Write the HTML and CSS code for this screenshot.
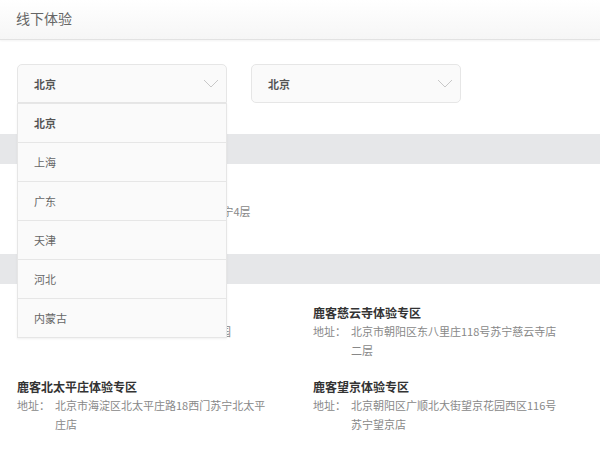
FILE: index.html
```html
<!doctype html>
<html lang="zh-CN">
<head>
    <meta charset="UTF-8">
    <meta name="viewport" content="width=device-width, initial-scale=1.0">
    <title>线下体验</title>
    <link rel="stylesheet" href="styles.css">
</head>
<body>
<div class="header">
    <h1 class="header__title">线下体验</h1>
</div>
<div class="filter">
    <div class="picker picker--open">
        <div class="picker__value">
            <span>北京</span>
            <svg class="picker__arrow" width="16" height="9" viewBox="0 0 16 9"><path d="M1 1 L8 8 L15 1" fill="none" stroke="#c8c8c8" stroke-width="1"/></svg>
        </div>
        <ul class="picker__list">
            <li class="picker__item picker__item--active">北京</li>
            <li class="picker__item">上海</li>
            <li class="picker__item">广东</li>
            <li class="picker__item">天津</li>
            <li class="picker__item">河北</li>
            <li class="picker__item">内蒙古</li>
        </ul>
    </div>
    <div class="picker">
        <div class="picker__value">
            <span>北京</span>
            <svg class="picker__arrow" width="16" height="9" viewBox="0 0 16 9"><path d="M1 1 L8 8 L15 1" fill="none" stroke="#c8c8c8" stroke-width="1"/></svg>
        </div>
    </div>
</div>

<div class="band"></div>
<div class="stores stores--first">
    <div class="store">
        <h3 class="store__name">鹿客西单体验专区</h3>
        <p class="store__addr"><span class="store__label">地址：</span><span>北京市西城区西单北大街1200号苏宁4层</span></p>
    </div>
</div>

<div class="band"></div>
<div class="stores">
    <div class="store">
        <h3 class="store__name">鹿客中关村体验专区</h3>
        <p class="store__addr"><span class="store__label">地址：</span><span>北京市海淀区中关村大街苏宁广场园</span></p>
    </div>
    <div class="store">
        <h3 class="store__name">鹿客慈云寺体验专区</h3>
        <p class="store__addr"><span class="store__label">地址：</span><span>北京市朝阳区东八里庄118号苏宁慈云寺店二层</span></p>
    </div>
    <div class="store">
        <h3 class="store__name">鹿客北太平庄体验专区</h3>
        <p class="store__addr"><span class="store__label">地址：</span><span>北京市海淀区北太平庄路18西门苏宁北太平庄店</span></p>
    </div>
    <div class="store">
        <h3 class="store__name">鹿客望京体验专区</h3>
        <p class="store__addr"><span class="store__label">地址：</span><span>北京朝阳区广顺北大街望京花园西区116号苏宁望京店</span></p>
    </div>
</div>
</body>
</html>
```

FILE: styles.css
```css
body,html{font-family:"Noto Sans CJK SC","Liberation Sans",sans-serif;margin:0;padding:0;background:#fff;color:#333}
h1,h3,p,ul{margin:0;padding:0}

.header{height:35px;padding:0 16px 4px;border-bottom:1px solid #e2e2e2;background:linear-gradient(#fff,#f6f6f6);box-shadow:0 1px 2px rgba(0,0,0,.05);display:flex;align-items:center}
.header__title{font-size:14px;font-weight:normal;color:#666}

.filter{display:flex;gap:24px;padding:24px 17px 0;margin-bottom:31px}
.picker{position:relative;width:210px}
.picker__value{height:37px;border:1px solid #e6e6e6;border-radius:5px;background:#fafafa;display:flex;align-items:center;justify-content:space-between;padding:0 7px 0 16px;font-size:11px;font-weight:bold;color:#555}
.picker--open .picker__value{border-radius:5px 5px 0 0}
.picker__arrow{display:block}
.picker__list{position:absolute;left:0;top:39px;width:210px;list-style:none;background:#fafafa;border:1px solid #e6e6e6;border-top:0;box-sizing:border-box;box-shadow:0 1px 2px rgba(0,0,0,.06);z-index:2}
.picker__item{height:38px;border-top:1px solid #e6e6e6;padding-left:16px;display:flex;align-items:center;font-size:11px;color:#666}
.picker__item--active{font-weight:bold;color:#555}

.band{height:30px;background:#e6e7e9}
.stores{display:grid;grid-template-columns:296px 270px;padding:19px 17px 0;row-gap:17px}
.stores--first{height:71px}
.store{min-height:57px}
.store__name{font-size:12px;font-weight:bold;color:#333;line-height:19px}
.store__addr{display:flex;font-size:11px;color:#888;line-height:19px}
.store__label{flex:none;width:38px}
.store__addr span:last-child{width:212px}
```
